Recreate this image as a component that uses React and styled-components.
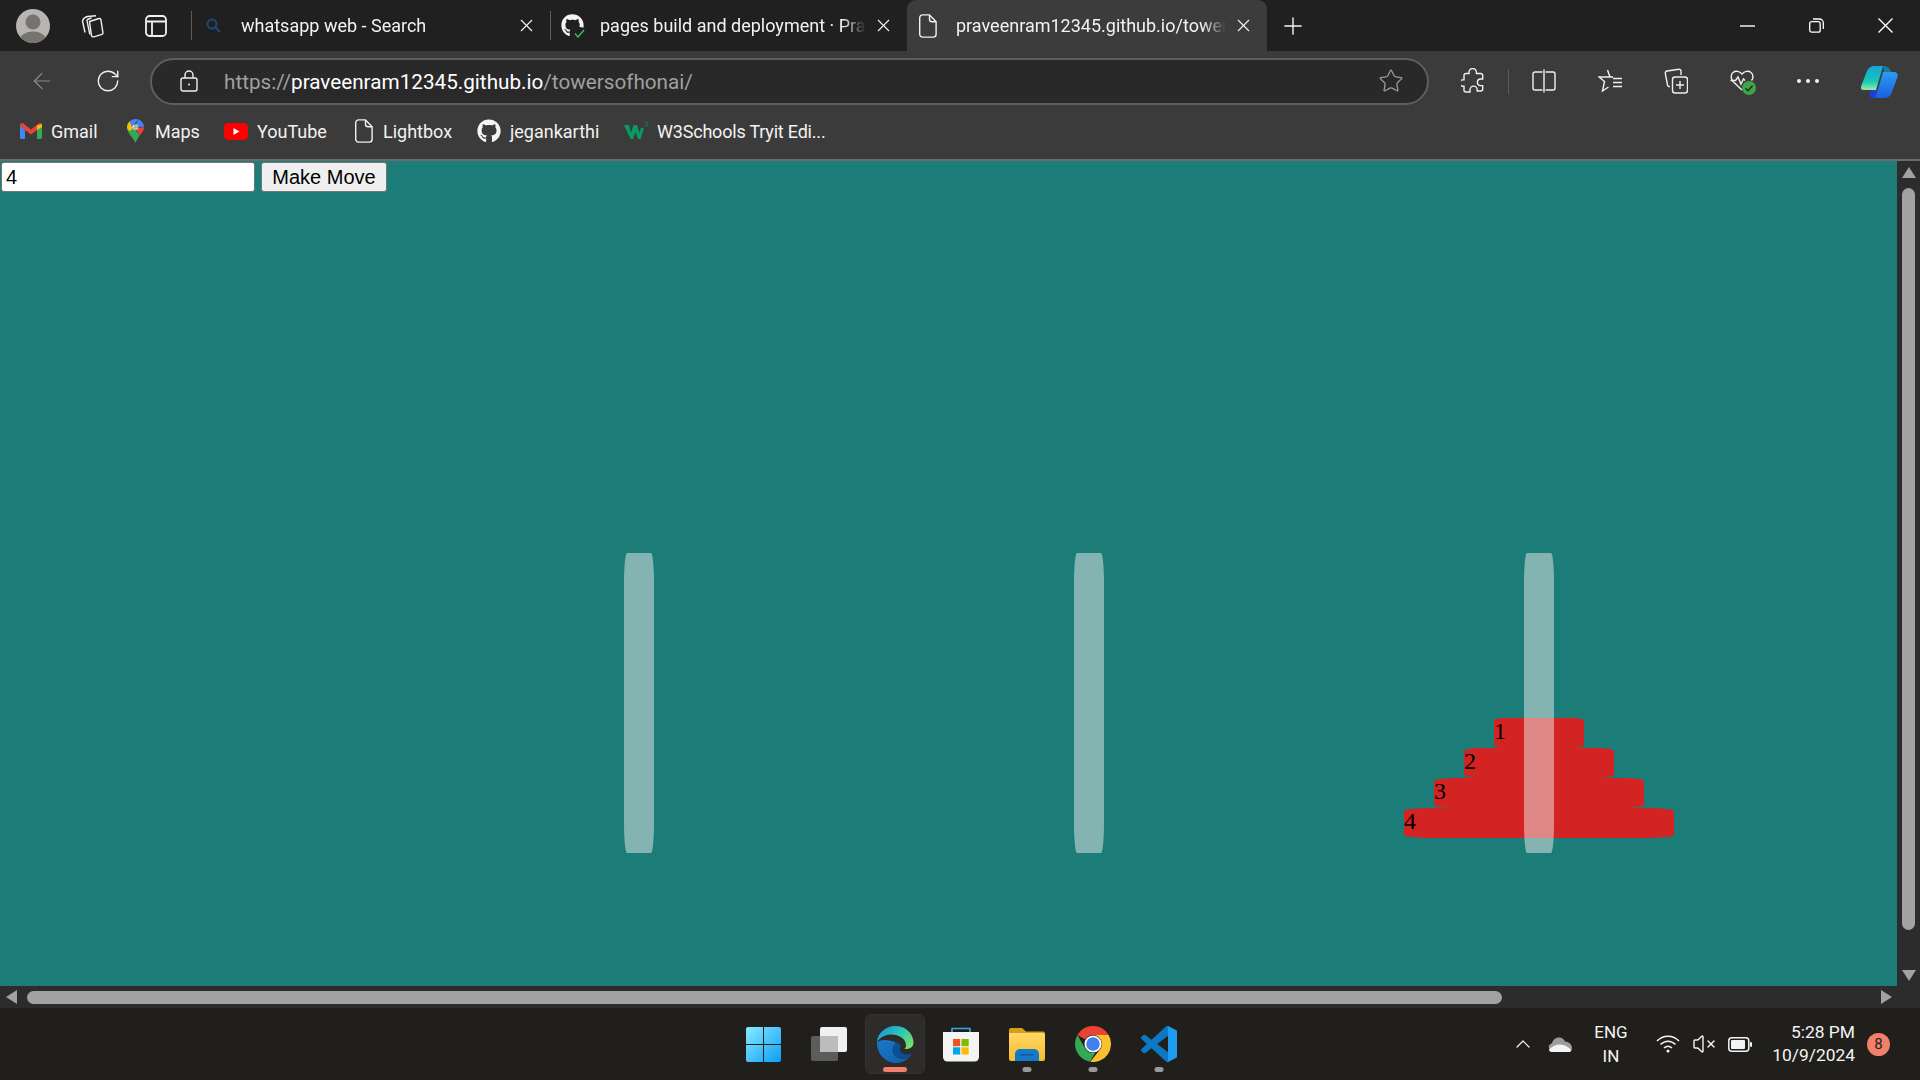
import React from "react";
import styled, { createGlobalStyle } from "styled-components";
import { ArrowLeft, RotateCw, X, Plus, Star, ChevronUp, VolumeX } from "lucide-react";
import { FaGithub } from "react-icons/fa";

const Global = createGlobalStyle`
  html, body { margin: 0; padding: 0; overflow: hidden; background: #1c7c77; }
  * { box-sizing: border-box; }
`;

const UI = `"Roboto", "Open Sans", sans-serif`;

const Screen = styled.div`
  width: 1920px; height: 1080px; display: flex; flex-direction: column; overflow: hidden;
  font-family: ${UI};
`;
const TabStrip = styled.div`
  height: 51px; flex: none; display: flex; align-items: center; background: #202020;
`;
const Avatar = styled.div`
  width: 34px; height: 34px; border-radius: 50%; margin-left: 16px; background: #b7b5b2;
  flex: none; overflow: hidden; display: flex;
`;
const StripTool = styled.div`
  flex: none; display: flex; margin-left: ${p => p.$ml}px;
`;
const Sep = styled.div`
  flex: none; width: 1px; height: ${p => p.$h || 29}px; background: #5c5c5c;
  margin-left: ${p => p.$ml || 0}px;
`;
const Tab = styled.div`
  flex: none; width: ${p => p.$w}px; height: 51px; display: flex; align-items: center;
  padding-left: 8px; padding-right: 13px; color: #f2f2f2; font-size: 18px;
  background: ${p => p.$active ? "#3c3c3c" : "transparent"};
  border-radius: ${p => p.$active ? "9px 9px 0 0" : "0"};
`;
const TabIcon = styled.div`
  width: 26px; flex: none; display: flex; justify-content: center; margin-right: 15px;
`;
const TabTitle = styled.div`
  flex: 1; min-width: 0; white-space: nowrap; overflow: hidden; margin-right: 3px;
  -webkit-mask-image: linear-gradient(to right, #000 calc(100% - 28px), transparent calc(100% - 4px));
  mask-image: linear-gradient(to right, #000 calc(100% - 28px), transparent calc(100% - 4px));
`;
const CheckBadge = styled.span`
  position: absolute; right: -3px; bottom: -3px; width: 14px; height: 13px; display: flex;
  align-items: center; justify-content: center; background: #202020; border-radius: 50%;
`;
const IconStack = styled.span`position: relative; display: flex;`;
const WinControls = styled.div`
  margin-left: auto; display: flex; align-items: center; color: #fff; padding-right: 27px; gap: 54px;
`;
const NavBar = styled.div`
  height: 60px; flex: none; display: flex; align-items: center; background: #3b3b3b; padding-left: 29px;
  padding-bottom: 0; color: #f0f0f0;
`;
const Address = styled.div`
  width: 1279px; height: 47px; flex: none; margin-left: 29px; display: flex; align-items: center;
  border: 2px solid #5e5e5e; border-radius: 24px; background: #292929; padding: 0 23px 0 28px;
`;
const Url = styled.div`
  margin-left: 26px; flex: 1; font-size: 20.7px; color: #a0a0a0; white-space: nowrap; margin-top: 1px;
`;
const Domain = styled.span`color: #fff;`;
const NavTools = styled.div`
  display: flex; align-items: center; margin-left: 32px;
`;
const NavSlot = styled.div`
  flex: none; display: flex; position: relative; margin-left: ${p => p.$ml || 0}px;
`;
const HealthBadge = styled.svg`
  position: absolute; left: 12px; top: 12px;
`;
const BookmarkBar = styled.div`
  height: 48px; flex: none; display: flex; align-items: center; background: #3b3b3b; padding: 0 0 8px 19px;
`;
const Bookmark = styled.div`
  width: ${p => p.$w}px; flex: none; display: flex; align-items: center; gap: 9px;
  color: #f2f2f2; font-size: 18px; white-space: nowrap;
  letter-spacing: ${p => p.$tight ? "-0.2px" : "0"};
`;
const BookIcon = styled.div`
  width: ${p => p.$w}px; display: flex; justify-content: center; flex: none;
`;
const Divider = styled.div`height: 2px; flex: none; background: #6a6a6a;`;
const Viewport = styled.div`
  height: 825px; flex: none; display: flex;
`;
const Page = styled.div`
  flex: 1; background: #1c7c77; padding-top: 1px; min-width: 0;
`;
const Controls = styled.div`
  display: flex; gap: 6px; padding-left: 1px;
`;
const NumberInput = styled.input`
  width: 254px; height: 30px; border: 1px solid #767676; border-radius: 3px; background: #fff;
  font: 20px "Liberation Sans", Arial, sans-serif; color: #000; padding: 0 4px; margin: 0; outline: none;
`;
const MoveButton = styled.button`
  width: 126px; height: 30px; border: 1px solid #767676; border-radius: 3px; background: #efefef;
  font: 20px "Liberation Sans", Arial, sans-serif; color: #000; padding: 0; margin: 0;
`;
const Board = styled.div`
  display: flex; margin: 361px 0 0 414px;
`;
const Tower = styled.div`
  position: relative; width: 450px; height: 300px; flex: none; display: flex; flex-direction: column;
  align-items: center; justify-content: flex-end; padding-bottom: 15px;
`;
const Peg = styled.div`
  position: absolute; top: 0; left: 210px; width: 30px; height: 300px; border-radius: 10%;
  background: rgba(236, 236, 236, 0.5);
`;
const Disk = styled.div`
  width: ${p => p.$size * 60 + 30}px; height: 30px; flex: none; background: #d32423; border-radius: 10%;
  color: #000; font: 24px "Liberation Serif", "Times New Roman", serif;
`;
const VTrack = styled.div`
  width: 23px; flex: none; background: #2c2c2c; display: flex; flex-direction: column; align-items: center;
  padding: 6px 0 5px 0;
`;
const VThumb = styled.div`
  width: 13px; height: 742px; margin: 10px 0 0; background: #a2a2a2; border-radius: 7px; flex: none;
`;
const Spacer = styled.div`flex: 1;`;
const HTrack = styled.div`
  height: 22px; flex: none; background: #2c2c2c; display: flex; align-items: center; padding: 0 28px 0 6px;
`;
const HThumb = styled.div`
  width: 1475px; height: 13px; margin-left: 10px; background: #a2a2a2; border-radius: 7px; flex: none;
`;
const Taskbar = styled.div`
  height: 72px; flex: none; background: #201f1b; display: flex; align-items: center; color: #f4f4f4;
  padding-left: 733px;
`;
const Apps = styled.div`display: flex; gap: 6px; flex: none;`;
const AppSlot = styled.div`
  position: relative; width: 60px; height: 60px; border-radius: 6px; display: flex; align-items: center;
  justify-content: center; background: ${p => p.$active ? "#2d2c2a" : "transparent"};
  border: 1px solid ${p => p.$active ? "#343331" : "transparent"};
`;
const AppDot = styled.div`
  position: absolute; bottom: 1px; left: 50%; transform: translateX(-50%); height: 5px; border-radius: 3px;
  width: ${p => p.$active ? 24 : 9}px; background: ${p => p.$active ? "#f0806a" : "#9a9a9a"};
`;
const Tray = styled.div`
  margin-left: 322px; display: flex; align-items: center; flex: none;
`;
const TrayIcon = styled.div`
  flex: none; display: flex; margin-left: ${p => p.$ml}px;
`;
const Lang = styled.div`
  width: 40px; margin-left: 19px; flex: none; text-align: center; font-size: 17px; line-height: 24px;
`;
const Clock = styled.div`
  width: 90px; margin-left: 13px; flex: none; text-align: right; font-size: 17.4px; line-height: 23px; white-space: nowrap;
`;
const Badge = styled.div`
  width: 23px; height: 23px; margin-left: 12px; border-radius: 50%; background: #f0806a; color: #222;
  flex: none; display: flex; align-items: center; justify-content: center; font-size: 15px;
`;

const Doc = ({ w = 18, h = 24 }) => (
  <svg width={w} height={h} viewBox="0 0 18 24" fill="none" stroke="#f0f0f0" strokeWidth="1.4">
    <path d="M3.5 .9h7l6.6 6.8v12.6a2.8 2.8 0 0 1-2.8 2.8H3.5a2.8 2.8 0 0 1-2.8-2.8V3.7A2.8 2.8 0 0 1 3.5.9z" />
    <path d="M10.5 1v4.2a2.5 2.5 0 0 0 2.5 2.5h4" />
  </svg>
);

const ArrowGlyph = styled.svg`flex: none;`;
const Arrow = ({ dir }) => {
  const d = { up: "M7 0 14 11H0z", down: "M0 0h14L7 11z", left: "M11 0v14L0 7z", right: "M0 0v14L11 7z" }[dir];
  const [w, h] = dir === "up" || dir === "down" ? [14, 11] : [11, 14];
  return <ArrowGlyph width={w} height={h} viewBox={`0 0 ${w} ${h}`}><path d={d} fill="#a2a2a2" /></ArrowGlyph>;
};

const GoogleMapsPin = () => (
  <svg width="17" height="24" viewBox="0 0 17 24">
    <path d="M8.5 24C6 18 0 14.500 0 8.300L4 6l9 10c-2 3-3.500 5-4.500 8z" fill="#34a853" />
    <path d="M0 8.300C0 6 1 4 2.500 2.500L8 7 3 12C1 11 0 10 0 8.300z" fill="#fbbc04" />
    <path d="M2.500 2.500C4 1 6 0 8.500 0c1 0 2 .2 3 .6L5 8z" fill="#4285f4" />
    <path d="M11.500.6C14.500 1.800 17 4.500 17 8.300L8 7z" fill="#4285f4" />
    <path d="M17 8.300c0 3-1.500 5.200-4 7.700L8 9z" fill="#ea4335" />
    <circle cx="8.500" cy="8.300" r="3" fill="#fff" fillOpacity=".55" />
  </svg>
);

const Gmail = () => (
  <svg width="22" height="16" viewBox="0 0 22 16">
    <path d="M0 2v12.500A1.500 1.500 0 0 0 1.500 16H5V7z" fill="#4285f4" />
    <path d="M22 2v12.500a1.500 1.500 0 0 1-1.500 1.500H17V7z" fill="#34a853" />
    <path d="M0 2C0 .2 2 -.6 3.500.5L11 6.500 18.500.5C20-.6 22 .2 22 2l-5 5-6 4.500L5 7z" fill="#ea4335" />
    <path d="M17 2.500 22 1v3l-5 3z" fill="#fbbc04" />
  </svg>
);

const YouTube = () => (
  <svg width="24" height="17" viewBox="0 0 24 17">
    <rect width="24" height="17" rx="4.500" fill="#f00" />
    <path d="M9.500 5v7l6-3.500z" fill="#fff" />
  </svg>
);

const W3 = () => (
  <svg width="24" height="18" viewBox="0 0 24 18">
    <path d="M0 3h5l2 8 2.500-8h3.500l2.500 8L17 6h3l-3.500 11H14l-2.500-7L9 17H6.500z" fill="#0a9a64" />
    <path d="M20.500 0h3L22 1.800c1.500 0 1.800 2.400-.1 2.500-.6 0-1-.2-1.300-.5" fill="none" stroke="#0a9a64" strokeWidth=".7" />
  </svg>
);

const Copilot = () => (
  <svg width="37" height="33" viewBox="0 0 37 33">
    <defs>
      <linearGradient id="cpA" x1="0" y1="0" x2="0" y2="1"><stop offset="0" stopColor="#18a3d8" /><stop offset=".65" stopColor="#17c9b2" /><stop offset="1" stopColor="#a0e6a8" /></linearGradient>
      <linearGradient id="cpB" x1="0" y1="0" x2="0" y2="1"><stop offset="0" stopColor="#2a9cf0" /><stop offset="1" stopColor="#1a5fe0" /></linearGradient>
    </defs>
    <path d="M13 1h9L15 25H2.500C.5 25-.5 23.500 0 21.500L6 6c1-3 4-5 7-5z" fill="url(#cpA)" />
    <path d="M22 1c4 0 7 2 8 6h-7z" fill="#0f7fa8" />
    <path d="M10 25h7l-3 8h-2c-2.500 0-4-2-3.300-4z" fill="#1c3fd4" />
    <path d="M22 7h11c3 0 4.500 2.500 3.500 5L31 27c-1 3.500-4 6-7.500 6H14l4-12z" fill="url(#cpB)" />
  </svg>
);

const EdgeLogo = () => (
  <svg width="37" height="37" viewBox="0 0 37 37">
    <defs>
      <linearGradient id="edA" x1="0" y1="0" x2="1" y2=".7"><stop offset="0" stopColor="#0f8fd8" /><stop offset=".55" stopColor="#2ec4b6" /><stop offset="1" stopColor="#72de6a" /></linearGradient>
      <linearGradient id="edB" x1="0" y1="0" x2="1" y2="1"><stop offset="0" stopColor="#1a78c8" /><stop offset="1" stopColor="#0f5fa8" /></linearGradient>
    </defs>
    <path d="M18.500 0C8.500 0 .6 7 0 16c3-5 9-7.500 14-7.500 8 0 15 4 15 11 0 2-1 3-1.500 3.500 3 .5 9-.5 9-6.500C36.500 7.500 28.500 0 18.500 0z" fill="url(#edA)" />
    <path d="M0 16C-.6 28 9 37 19 37c5 0 10-2 13.500-5.500-5 2-10.500 1.500-14-1.500-4-3.500-3.500-10 1-13-8-4.500-16-3-19.500-1z" fill="url(#edB)" />
    <path d="M19.500 16.500c-4.500 3-5 9.500-1 13 3.500 3 9 3.500 14 1.500 1-1 2-2.200 2.500-3.500-6 2.500-12 0-12-4.500 0-1 .7-2 1-3-1-2-2.500-3-4.500-3.500z" fill="#0c4f96" />
  </svg>
);

const ChromeLogo = () => (
  <svg width="36" height="36" viewBox="4 4 40 40">
    <path d="M24 4a20 20 0 0 1 17.320 10H24a10 10 0 0 0-8.660 5L6.680 14A20 20 0 0 1 24 4z" fill="#ea4335" />
    <path d="M6.680 14l8.660 15A10 10 0 0 0 26.600 33.660L20.500 43.700A20 20 0 0 1 6.680 14z" fill="#34a853" />
    <path d="M41.320 14H24a10 10 0 0 1 8.660 15L21 43.800A20 20 0 0 0 41.320 14z" fill="#fbc02d" />
    <circle cx="24" cy="24" r="9.500" fill="#fff" />
    <circle cx="24" cy="24" r="7.500" fill="#3f7fee" />
  </svg>
);

const VSCode = () => (
  <svg width="36" height="36" viewBox="0 0 100 100">
    <path d="M96.500 10.800 75.900.9a6.200 6.200 0 0 0-7.100 1.200L29.400 38.100 12.200 25a4.200 4.200 0 0 0-5.300.2l-5.500 5a4.200 4.200 0 0 0 0 6.200L16.300 50 1.400 63.600a4.200 4.200 0 0 0 0 6.200l5.500 5a4.200 4.200 0 0 0 5.300.2l17.200-13.100 39.400 36a6.200 6.200 0 0 0 7.100 1.200l20.600-9.900a6.200 6.200 0 0 0 3.500-5.600V16.400a6.200 6.200 0 0 0-3.500-5.600zM75 72.700 45.100 50 75 27.300z" fill="#0b78c4" />
    <path d="M68.800 2.100A6.200 6.200 0 0 1 75.900.9l20.600 9.900a6.200 6.200 0 0 1 3.500 5.600v67.200a6.200 6.200 0 0 1-3.500 5.600l-20.600 9.900a6.200 6.200 0 0 1-7.100-1.200c2.300 2.300 6.200.7 6.200-2.600V4.700c0-3.300-3.900-4.900-6.200-2.600z" fill="#1f9cf0" />
  </svg>
);

const Store = () => (
  <svg width="36" height="36" viewBox="0 0 36 36">
    <path d="M9 8V2.500h18V8" fill="none" stroke="#3aa8e8" strokeWidth="1.600" />
    <path d="M0 6h36v25a4.500 4.500 0 0 1-4.500 4.500h-27A4.500 4.500 0 0 1 0 31z" fill="#f4f4f4" />
    <rect x="10" y="13" width="7.200" height="7.200" fill="#f25022" />
    <rect x="18.500" y="13" width="7.200" height="7.200" fill="#7fba00" />
    <rect x="10" y="21.300" width="7.200" height="7.200" fill="#00a4ef" />
    <rect x="18.500" y="21.300" width="7.200" height="7.200" fill="#ffb900" />
  </svg>
);

const Files = () => (
  <svg width="36" height="33" viewBox="0 0 36 33">
    <defs><linearGradient id="flA" x1="0" y1="0" x2="0" y2="1"><stop offset="0" stopColor="#ffd766" /><stop offset="1" stopColor="#f5bc2f" /></linearGradient></defs>
    <path d="M0 2a2 2 0 0 1 2-2h11l4 3.500h17a2 2 0 0 1 2 2V8H0z" fill="#d59e1d" />
    <path d="M0 5h34a2 2 0 0 1 2 2v24a2 2 0 0 1-2 2H2a2 2 0 0 1-2-2z" fill="url(#flA)" />
    <path d="M6 33v-7a5 5 0 0 1 5-5h14a5 5 0 0 1 5 5v7z" fill="#1579c8" />
    <rect x="11" y="26" width="14" height="1.500" fill="#0d5a9c" />
  </svg>
);

const StartLogo = () => (
  <svg width="35" height="35" viewBox="0 0 35 35">
    <defs><linearGradient id="stA" x1="0" y1="0" x2="1" y2="1"><stop offset="0" stopColor="#86ecff" /><stop offset="1" stopColor="#0d9cf5" /></linearGradient></defs>
    <path d="M0 2a2 2 0 0 1 2-2h15v17H0zM18 0h15a2 2 0 0 1 2 2v15H18zM0 18h17v17H2a2 2 0 0 1-2-2zM18 18h17v15a2 2 0 0 1-2 2H18z" fill="url(#stA)" />
  </svg>
);

const TaskView = () => (
  <svg width="36" height="34" viewBox="0 0 36 34">
    <rect x="9" y="0" width="27" height="25" rx="2" fill="#f0f0f0" />
    <rect x="0" y="9" width="27" height="25" rx="2" fill="#5c5c5c" />
    <rect x="9" y="9" width="18" height="16" fill="#bcbcbc" />
  </svg>
);

const tabs = [
  { w: 358, title: "whatsapp web - Search", icon: (
    <svg width="15" height="15" viewBox="0 0 15 15" fill="none" stroke="#1d4a75" strokeWidth="2"><circle cx="6" cy="6" r="4.500" /><path d="m9.500 9.500 4.500 4.500" /></svg>
  ) },
  { w: 356, title: "pages build and deployment · Praveenram12345", icon: (
    <IconStack>
      <FaGithub size={23} color="#f4f4f4" />
      <CheckBadge>
        <svg width="11" height="9" viewBox="0 0 11 9" fill="none"><path d="M1 4.500 4 8l6-7" stroke="#3fb950" strokeWidth="1.500" /></svg>
      </CheckBadge>
    </IconStack>
  ) },
  { w: 360, active: true, title: "praveenram12345.github.io/towersofhonai/", icon: <Doc /> },
];

const bookmarks = [
  { w: 106, iw: 23, label: "Gmail", icon: <Gmail /> },
  { w: 99, iw: 21, label: "Maps", icon: <GoogleMapsPin /> },
  { w: 129, iw: 24, label: "YouTube", icon: <YouTube /> },
  { w: 124, iw: 21, label: "Lightbox", icon: <Doc /> },
  { w: 147, iw: 24, label: "jegankarthi", icon: <FaGithub size={24} color="#f4f4f4" /> },
  { w: 210, iw: 24, label: "W3Schools Tryit Edi...", icon: <W3 />, tight: true },
];

const apps = [
  { icon: <StartLogo /> },
  { icon: <TaskView /> },
  { icon: <EdgeLogo />, active: true, dot: true },
  { icon: <Store /> },
  { icon: <Files />, dot: true },
  { icon: <ChromeLogo />, dot: true },
  { icon: <VSCode />, dot: true },
];

const stroke = { fill: "none", stroke: "#f0f0f0", strokeWidth: 1.4 };

export default function App() {
  return (
    <Screen>
      <Global />
      <TabStrip>
        <Avatar>
          <svg width="34" height="34" viewBox="0 0 34 34"><circle cx="17" cy="13" r="7.500" fill="#77746f" /><ellipse cx="17" cy="31" rx="13" ry="8.500" fill="#77746f" /></svg>
        </Avatar>
        <StripTool $ml={31}>
          <svg width="24" height="24" viewBox="0 0 24 24" {...stroke}>
            <path d="M9.500 7.500 19 4.500a1.500 1.500 0 0 1 1.900 1.100l2 13a1.500 1.500 0 0 1-1 1.700l-8 2.500a2 2 0 0 1-2.400-1.300z" transform="translate(-1)" />
            <path d="M10.500 4 7.500 5a2 2 0 0 0-1.400 2.400l2.800 13.100" /><path d="M15 1.800 6.500 2.500C3 3.500 2 5 1.500 7l2.500 11.500" />
          </svg>
        </StripTool>
        <StripTool $ml={40}>
          <svg width="22" height="22" viewBox="0 0 22 22" fill="none" stroke="#f0f0f0" strokeWidth="1.800">
            <rect x="1" y="1" width="20" height="20" rx="3.500" /><path d="M1.200 6.500H21M7 6.500V21" />
          </svg>
        </StripTool>
        <Sep $ml={24} />
        {tabs.map(t => (
          <React.Fragment key={t.title}>
            <Tab $w={t.w} $active={t.active}>
              <TabIcon>{t.icon}</TabIcon>
              <TabTitle>{t.title}</TabTitle>
              <X size={21} strokeWidth={1.25} color="#f4f4f4" />
            </Tab>
            {t.w === 358 && <Sep />}
          </React.Fragment>
        ))}
        <StripTool $ml={12}><Plus size={28} strokeWidth={1.2} color="#f4f4f4" /></StripTool>
        <WinControls>
          <svg width="15" height="2" viewBox="0 0 15 2"><path d="M0 1h15" stroke="#fff" strokeWidth="1.400" /></svg>
          <svg width="15" height="15" viewBox="0 0 15 15" fill="none" stroke="#fff" strokeWidth="1.300"><rect x=".7" y="3.700" width="10.500" height="10.500" rx="2" /><path d="M4 1h6.500A3.800 3.800 0 0 1 14.300 4.800V11" /></svg>
          <svg width="15" height="15" viewBox="0 0 15 15" fill="none" stroke="#fff" strokeWidth="1.400"><path d="M.5.500l14 14M14.500.500l-14 14" /></svg>
        </WinControls>
      </TabStrip>
      <NavBar>
        <ArrowLeft size={26} strokeWidth={1.1} color="#8c8c8c" />
        <NavSlot $ml={40}><RotateCw size={26} strokeWidth={1.3} color="#f0f0f0" /></NavSlot>
        <Address>
          <svg width="18" height="22" viewBox="0 0 18 22" {...stroke}>
            <rect x="1" y="8" width="16" height="13" rx="2" /><path d="M5 8V5a4 4 0 0 1 8 0v3" /><circle cx="9" cy="14.500" r="1" fill="#f0f0f0" stroke="none" />
          </svg>
          <Url>https://<Domain>praveenram12345.github.io</Domain>/towersofhonai/</Url>
          <Star size={26} strokeWidth={1.2} color="#9a9a9a" />
        </Address>
        <NavTools>
          <svg width="24" height="26" viewBox="0 0 24 26" {...stroke}>
            <path d="M8 5.500V4.200a3.700 3.700 0 0 1 7.400 0v1.300h4.300a2 2 0 0 1 2 2v3.500h-2a3.300 3.300 0 0 0 0 6.600h2v3.400a2 2 0 0 1-2 2h-3.500v-1.300a3.600 3.600 0 0 0-7.200 0V24H5a2 2 0 0 1-2-2v-3.700H1.900a3.200 3.200 0 0 1 0-6.400H3V7.500a2 2 0 0 1 2-2z" />
          </svg>
          <Sep $h={25} $ml={23} />
          <NavSlot $ml={23}>
            <svg width="24" height="24" viewBox="0 0 24 24" {...stroke}>
              <path d="M10.500 3H3a2 2 0 0 0-2 2v14a2 2 0 0 0 2 2h7.500M13.500 3H21a2 2 0 0 1 2 2v14a2 2 0 0 1-2 2h-7.500M12 .500v23" />
            </svg>
          </NavSlot>
          <NavSlot $ml={42}>
            <svg width="24" height="24" viewBox="0 0 24 24" {...stroke}>
              <path d="M9.500 1 12 8h-11l5.500 4.500L4.500 22l6-4M9.500 1 12 8h3" /><path d="M15 9.500h9M15 13.500h9M15 17.500h9" />
            </svg>
          </NavSlot>
          <NavSlot $ml={42}>
            <svg width="24" height="26" viewBox="0 0 24 26" {...stroke}>
              <rect x="8.500" y="9" width="15" height="16" rx="2.500" /><path d="M16 13v8M12 17h8" /><path d="M17 7V3a2 2 0 0 0-2.400-1.700L3 3a2 2 0 0 0-1.700 2.400L3.500 17a2 2 0 0 0 2.500 1.500" />
            </svg>
          </NavSlot>
          <NavSlot $ml={42}>
            <svg width="24" height="24" viewBox="0 0 24 24" {...stroke}>
              <path d="M12 21 3.500 13C.5 10 .5 5.500 3 3.500c2.500-2 6.500-1.500 9 1.500 2.500-3 6.500-3.500 9-1.500 2.500 2 2.500 6 .5 8" /><path d="M.5 11.500h5l2.500-3.500 3 7 2.500-5 1.500 1.500" />
            </svg>
            <HealthBadge width="14" height="14" viewBox="0 0 14 14"><circle cx="7" cy="7" r="7" fill="#3ea34b" /><path d="M3.500 7.200 6 9.700l4.500-5" fill="none" stroke="#1b2a1d" strokeWidth="1.400" /></HealthBadge>
          </NavSlot>
          <NavSlot $ml={42}>
            <svg width="24" height="6" viewBox="0 0 24 6" fill="#f0f0f0"><circle cx="3" cy="3" r="2" /><circle cx="12" cy="3" r="2" /><circle cx="21" cy="3" r="2" /></svg>
          </NavSlot>
          <NavSlot $ml={41}><Copilot /></NavSlot>
        </NavTools>
      </NavBar>
      <BookmarkBar>
        {bookmarks.map(b => (
          <Bookmark key={b.label} $w={b.w} $tight={b.tight}>
            <BookIcon $w={b.iw}>{b.icon}</BookIcon>
            {b.label}
          </Bookmark>
        ))}
      </BookmarkBar>
      <Divider />
      <Viewport>
        <Page>
          <Controls>
            <NumberInput defaultValue="4" />
            <MoveButton>Make Move</MoveButton>
          </Controls>
          <Board>
            <Tower><Peg /></Tower>
            <Tower><Peg /></Tower>
            <Tower>
              {[1, 2, 3, 4].map(n => <Disk key={n} $size={n}>{n}</Disk>)}
              <Peg />
            </Tower>
          </Board>
        </Page>
        <VTrack>
          <Arrow dir="up" />
          <VThumb />
          <Spacer />
          <Arrow dir="down" />
        </VTrack>
      </Viewport>
      <HTrack>
        <Arrow dir="left" />
        <HThumb />
        <Spacer />
        <Arrow dir="right" />
      </HTrack>
      <Taskbar>
        <Apps>
          {apps.map((a, i) => (
            <AppSlot key={i} $active={a.active}>
              {a.icon}
              {a.dot && <AppDot $active={a.active} />}
            </AppSlot>
          ))}
        </Apps>
        <Tray>
          <ChevronUp size={24} strokeWidth={1.2} color="#f4f4f4" />
          <TrayIcon $ml={13}>
            <svg width="24" height="15" viewBox="0 0 24 15"><path d="M5 15a4.500 4.500 0 0 1-1-8.800C5 2 9 0 12 .5c2.500.5 4 2 5 4 4 0 7 3 7 6.500 0 2-1.500 4-4 4z" fill="#9c9c9c" /><path d="M1 13.500C3 10 7 7.500 12 7.500s9 3 11.500 6c-.8 1-2 1.500-3.500 1.500H5c-2 0-3-.5-4-1.500z" fill="#f4f4f4" /></svg>
          </TrayIcon>
          <Lang>ENG<br />IN</Lang>
          <TrayIcon $ml={25}>
            <svg width="24" height="18" viewBox="0 0 24 18" fill="none" stroke="#f4f4f4" strokeWidth="1.500"><path d="M1 6c6-6.500 16-6.500 22 0M4.500 9.500c4.500-4.500 10.500-4.500 15 0M8 13c2.500-2.200 5.500-2.200 8 0" /><circle cx="12" cy="16" r="1.500" fill="#f4f4f4" stroke="none" /></svg>
          </TrayIcon>
          <TrayIcon $ml={12}><VolumeX size={24} strokeWidth={1.4} color="#f4f4f4" /></TrayIcon>
          <TrayIcon $ml={12}>
            <svg width="24" height="15" viewBox="0 0 24 15"><rect x=".8" y=".8" width="20" height="13.400" rx="3" fill="none" stroke="#f4f4f4" strokeWidth="1.500" /><rect x="3" y="3" width="14" height="9" rx="1" fill="#f4f4f4" /><rect x="22" y="5" width="2" height="5" rx="1" fill="#f4f4f4" /></svg>
          </TrayIcon>
          <Clock>5:28 PM<br />10/9/2024</Clock>
          <Badge>8</Badge>
        </Tray>
      </Taskbar>
    </Screen>
  );
}
